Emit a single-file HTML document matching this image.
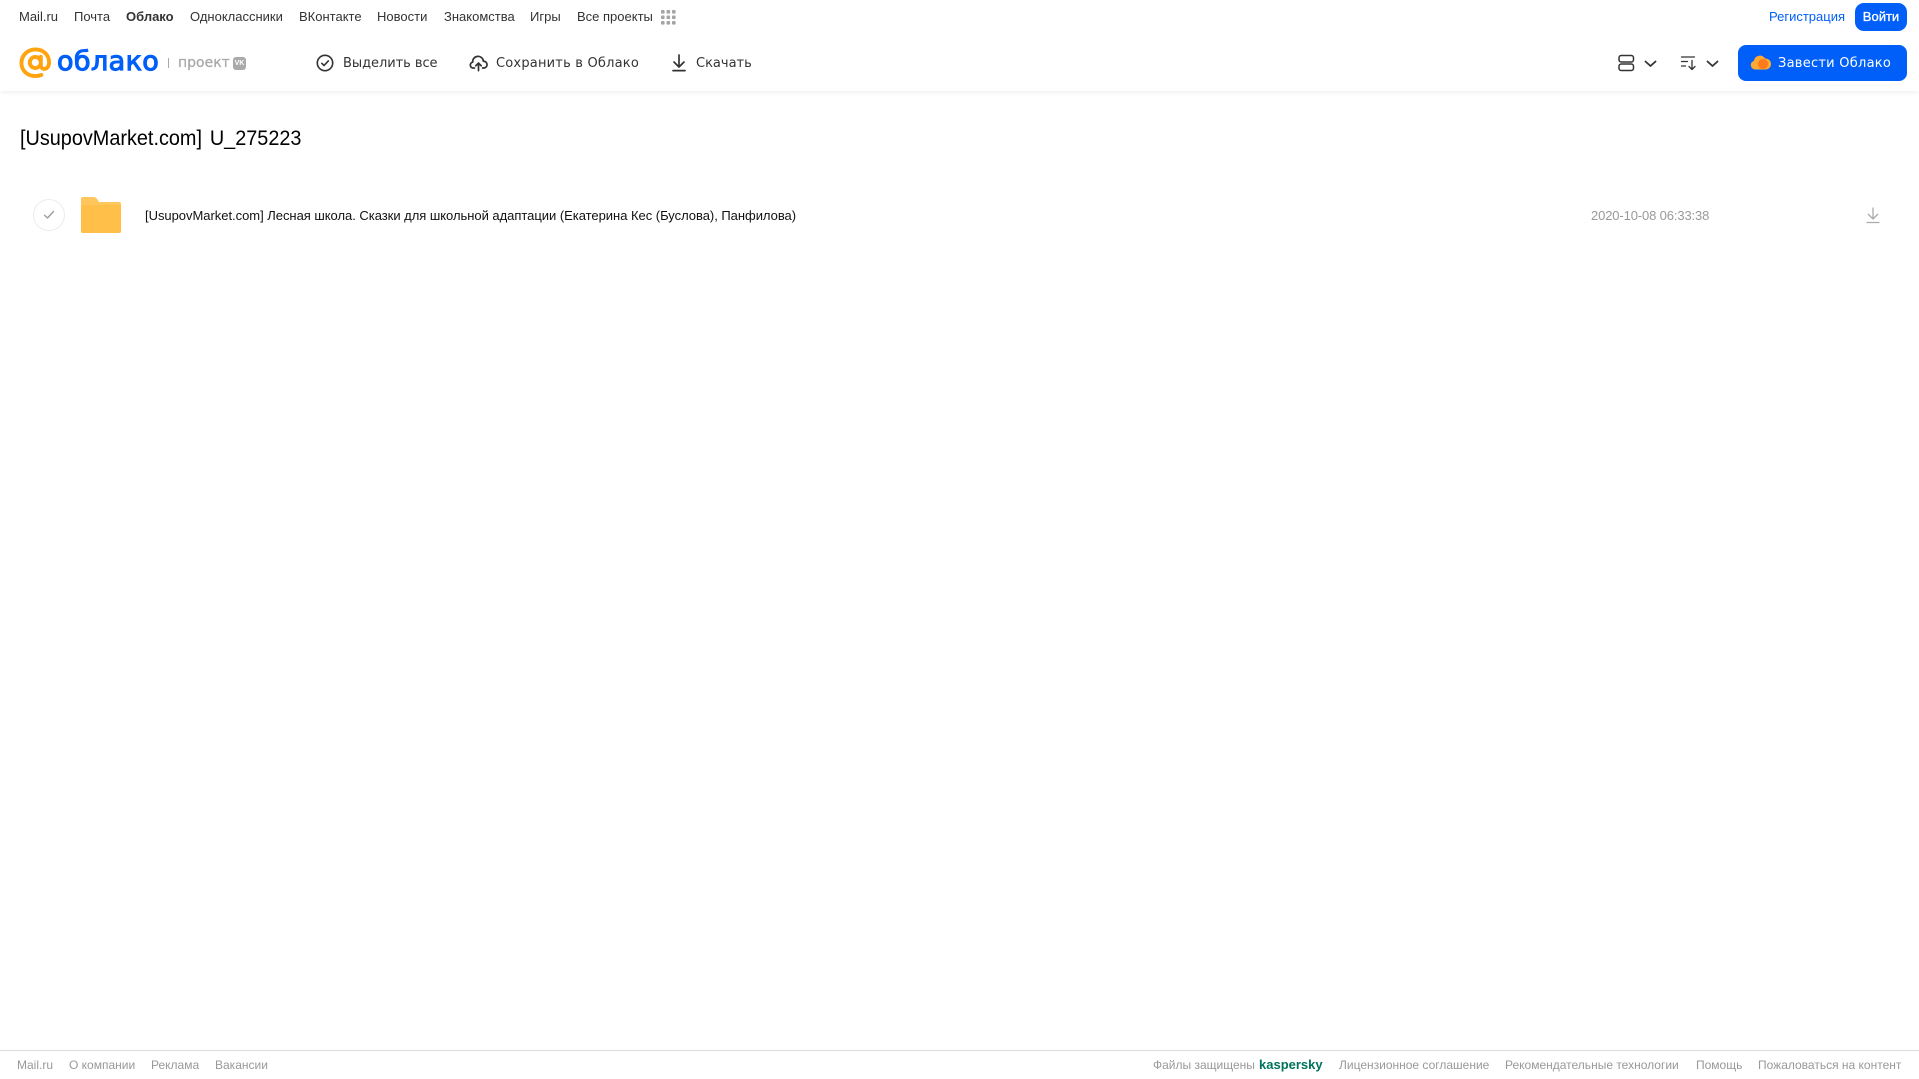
<!DOCTYPE html>
<html lang="ru"><head><meta charset="utf-8"><title>Облако</title>
<style>
html,body{margin:0;padding:0;background:#fff;width:1919px;height:1079px;overflow:hidden}
body{position:relative;font-family:"Liberation Sans",Arial,sans-serif}
.t{position:absolute;white-space:nowrap;line-height:20px}
.n{top:7px;font-size:13px;color:#333}
.d{top:53px;font-family:"DejaVu Sans",sans-serif;font-size:13px;color:#333;margin-top:1px}
.f{top:1055px;font-size:12px;color:#999}
svg{position:absolute;overflow:visible}
</style></head><body>
<div style="position:absolute;left:0;top:0;width:1919px;height:91px;background:#fff;box-shadow:0 1px 5px rgba(0,0,0,.08)"></div>

<span class="t n" style="left:19px">Mail.ru</span>
<span class="t n" style="left:74px">Почта</span>
<span class="t n" style="left:126px;font-weight:bold">Облако</span>
<span class="t n" style="left:190px">Одноклассники</span>
<span class="t n" style="left:299px">ВКонтакте</span>
<span class="t n" style="left:377px">Новости</span>
<span class="t n" style="left:444px">Знакомства</span>
<span class="t n" style="left:530px">Игры</span>
<span class="t n" style="left:577px">Все проекты</span>
<svg style="left:661px;top:10px" width="15" height="15" fill="#a5a5a5"><rect x="0" y="0" width="3.6" height="3.6" rx="1"/><rect x="5.5" y="0" width="3.6" height="3.6" rx="1"/><rect x="11" y="0" width="3.6" height="3.6" rx="1"/><rect x="0" y="5.5" width="3.6" height="3.6" rx="1"/><rect x="5.5" y="5.5" width="3.6" height="3.6" rx="1"/><rect x="11" y="5.5" width="3.6" height="3.6" rx="1"/><rect x="0" y="11" width="3.6" height="3.6" rx="1"/><rect x="5.5" y="11" width="3.6" height="3.6" rx="1"/><rect x="11" y="11" width="3.6" height="3.6" rx="1"/></svg>

<span class="t n" style="left:1769px;color:#005ff9">Регистрация</span>
<div style="position:absolute;left:1855px;top:3px;width:52px;height:28px;border-radius:9px;background:#005ff9;color:#fff;font-size:13px;-webkit-text-stroke:.3px #fff;line-height:28px;text-align:center">Войти</div>

<!-- logo -->
<svg style="left:19px;top:47px" width="33" height="32" viewBox="0 0 34 32" fill="none"><path d="M22.5 15.5a5.7 5.700 0 1 1-11.400 0a5.700 5.700 0 1 1 11.400 0zM22.500 9.500v8.500c0 2.600 1.600 4 3.700 4 2.700 0 4.800-2.700 4.800-6.500C31 7.600 25 2 17 2S2.500 8 2.500 16s6.300 13.500 14.500 13.500c2.300 0 4.200-.4 6-1.200" stroke="#ffa30f" stroke-width="4" stroke-linecap="round"/></svg>
<span class="t" style="left:57px;top:47px;line-height:30px;font-family:'DejaVu Sans',sans-serif;font-size:27px;letter-spacing:.4px;-webkit-text-stroke:1.1px #005ff9;color:#005ff9">облако</span>
<div style="position:absolute;left:168px;top:58px;width:1px;height:10px;background:#aaa"></div>
<span class="t d" style="left:178px;top:52px;color:#a8a8a8;font-size:14px;-webkit-text-stroke:.25px #a8a8a8">проект</span>
<div style="position:absolute;left:233px;top:57px;width:13px;height:13px;border-radius:3px;background:#aaa;color:#fff;font-size:7px;font-weight:bold;line-height:13px;text-align:center">VK</div>

<!-- toolbar -->
<svg style="left:316px;top:54px" width="18" height="18" fill="none" stroke="#333" stroke-width="1.600"><circle cx="9" cy="9" r="7.700"/><path d="M5.800 9.300l2.300 2.200 4.200-4.600" stroke-linecap="round" stroke-linejoin="round"/></svg>
<span class="t d" style="left:343px;letter-spacing:-.05px">Выделить все</span>
<svg style="left:470px;top:55px" width="17" height="17" viewBox="0 0 19 18" fill="none" stroke="#333" stroke-width="1.900" stroke-linecap="round" stroke-linejoin="round"><path d="M5 14H4.300A3.300 3.300 0 0 1 3 7.500a6 6 0 0 1 12 -1a3.700 3.700 0 0 1 .6 7.500H14"/><path d="M9.500 17V9M6.500 11.500l3-3 3 3"/></svg>
<span class="t d" style="left:496px;letter-spacing:.2px">Сохранить в Облако</span>
<svg style="left:671px;top:54px" width="16" height="18" fill="none" stroke="#333" stroke-width="1.700" stroke-linecap="round" stroke-linejoin="round"><path d="M8 1v11.500M3 8l5 5 5-5M2 16.600h12"/></svg>
<span class="t d" style="left:696px">Скачать</span>

<!-- right toolbar -->
<svg style="left:1618px;top:54px" width="17" height="18" fill="none" stroke="#333" stroke-width="1.500"><rect x="1" y="1.500" width="14.500" height="6.500" rx="2.200"/><rect x="1" y="10" width="14.500" height="6.500" rx="2.200"/></svg>
<svg style="left:1643.500px;top:60px" width="13" height="8" fill="none" stroke="#333" stroke-width="1.800" stroke-linecap="round" stroke-linejoin="round"><path d="M1.500 1.500L6.500 6l5-4.500"/></svg>
<svg style="left:1681px;top:55px" width="16" height="16" fill="none" stroke="#333" stroke-width="1.300" stroke-linecap="round" stroke-linejoin="round"><path d="M.5 2h13M.5 6.500h6M.5 11h4M11 5.500v9M8 11.500l3 3 3-3"/></svg>
<svg style="left:1705.500px;top:60px" width="13" height="8" fill="none" stroke="#333" stroke-width="1.800" stroke-linecap="round" stroke-linejoin="round"><path d="M1.500 1.500L6.500 6l5-4.500"/></svg>
<div style="position:absolute;left:1738px;top:45px;width:169px;height:36px;border-radius:8px;background:#005ff9"></div>
<svg style="left:1750px;top:54px" width="20" height="17"><path d="M5 15.500a4.500 4.500 0 0 1-1-8.800A6 6 0 0 1 15 4.500a5.500 5.500 0 0 1 1 11z" fill="#ffa930"/><circle cx="13" cy="10" r="5" fill="#ff7a1a"/></svg>
<span class="t d" style="left:1778px;color:#fff;letter-spacing:.25px">Завести Облако</span>

<!-- content -->
<span class="t" style="left:20px;top:126.500px;line-height:24px;font-size:21px;color:#000;word-spacing:2.500px;transform:scaleX(.945);transform-origin:0 50%">[UsupovMarket.com] U_275223</span>
<div style="position:absolute;left:33px;top:199px;width:30px;height:30px;border:1px solid #ececec;border-radius:50%"></div>
<svg style="left:43px;top:210px" width="12" height="10" fill="none" stroke="#999" stroke-width="1.300" stroke-linecap="round" stroke-linejoin="round"><path d="M1.500 5.200l3 2.800 6-6.500"/></svg>
<svg style="left:81px;top:197px" width="40" height="36"><path d="M2 0h10c2 0 3 .6 4.500 2.500L18 5h20a2 2 0 0 1 2 2v27a2 2 0 0 1-2 2H2a2 2 0 0 1-2-2V2a2 2 0 0 1 2-2z" fill="#ffc65c"/><path d="M2 8h36a2 2 0 0 1 2 2v24a2 2 0 0 1-2 2H2a2 2 0 0 1-2-2V10a2 2 0 0 1 2-2z" fill="#ffbf48"/></svg>
<span class="t" style="left:145px;top:205.500px;font-size:13px;letter-spacing:-.03px;color:#111">[UsupovMarket.com] Лесная школа. Сказки для школьной адаптации (Екатерина Кес (Буслова), Панфилова)</span>
<span class="t" style="left:1591px;top:205.500px;font-size:13px;letter-spacing:-.13px;color:#999">2020-10-08 06:33:38</span>
<svg style="left:1866px;top:206px" width="14" height="18" fill="none" stroke="#aaa" stroke-width="1.300"><path d="M7 1.500v11M2 8l5 5 5-5M.5 16.500h13"/></svg>

<!-- footer -->
<div style="position:absolute;left:0;top:1050px;width:1919px;height:1px;background:#dcdcdc"></div>
<span class="t f" style="left:17px">Mail.ru</span>
<span class="t f" style="left:69px">О компании</span>
<span class="t f" style="left:151px">Реклама</span>
<span class="t f" style="left:215px">Вакансии</span>
<span class="t f" style="left:1153px">Файлы защищены</span>
<span class="t f" style="left:1259px;color:#00735c;font-weight:bold;font-size:13px">kaspersky</span>
<span class="t f" style="left:1339px">Лицензионное соглашение</span>
<span class="t f" style="left:1505px">Рекомендательные технологии</span>
<span class="t f" style="left:1696px">Помощь</span>
<span class="t f" style="left:1758px">Пожаловаться на контент</span>
</body></html>
